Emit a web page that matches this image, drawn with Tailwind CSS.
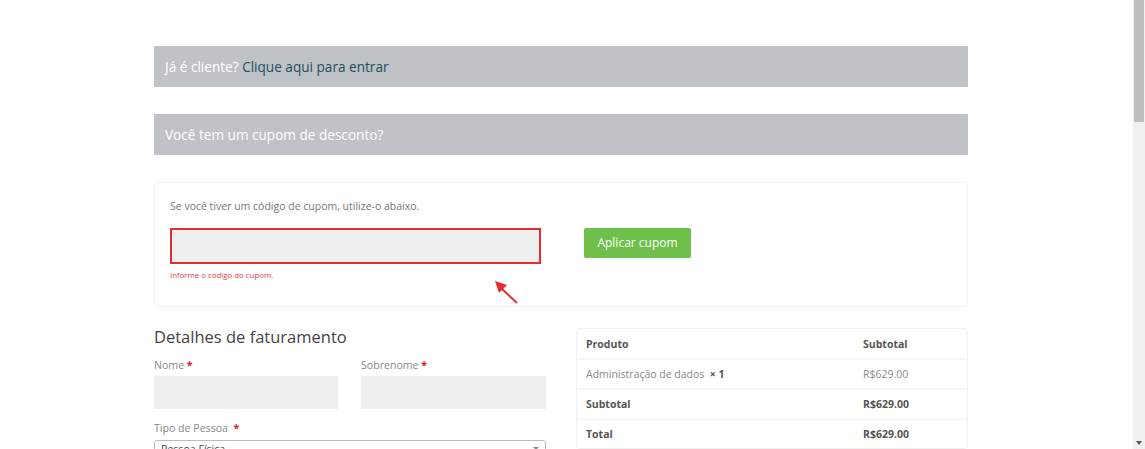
<!DOCTYPE html>
<html lang="pt-br">
  <head>
    <meta charset="UTF-8" />
    <title>Finalizar compra</title>
    <script src="https://cdn.jsdelivr.net/npm/@tailwindcss/browser@4"></script>
  </head>
  <body class="h-[449px] overflow-hidden bg-white font-['Open_Sans',sans-serif] text-[#666]">
    <div class="flex h-[449px]">
      <main class="relative flex-1 pl-[154px] pt-[46px]">
        <div class="w-[814px]">
          <!-- Avisos -->
          <div class="flex h-[41px] items-center bg-[#bfc2c6] px-[11px] pt-[2px] text-[13.6px] text-white">
            Já é cliente?&nbsp;<a href="#" class="text-[#1d4f5c]">Clique aqui para entrar</a>
          </div>
          <div class="mt-[27px] flex h-[41px] items-center bg-[#bfc2c6] px-[11px] pt-px text-[13.6px] text-white">
            Você tem um cupom de desconto?
          </div>

          <!-- Cupom -->
          <div class="mt-[27px] h-[125px] rounded border border-[#f0f0f0] pl-[15px] pt-[14px]">
            <p class="text-[10.5px] leading-[18px] text-[#777]">Se você tiver um código de cupom, utilize-o abaixo.</p>
            <div class="mt-[13px] flex items-start">
              <div class="w-[371px]">
                <input type="text" class="block h-[36px] w-full border-2 border-[#e52d2d] bg-[#efefef]" />
                <p class="mt-[6px] text-[7.85px] leading-[11px] text-[#e03c3c]">Informe o código do cupom.</p>
              </div>
              <button class="ml-[43px] h-[30px] w-[107px] rounded-[2px] bg-[#6fbf4b] text-[12px] text-white">Aplicar cupom</button>
            </div>
          </div>

          <div class="mt-[18px] flex justify-between">
            <!-- Faturamento -->
            <section class="w-[392px]">
              <h2 class="text-[16.5px] leading-[24px] text-[#444]">Detalhes de faturamento</h2>
              <div class="mt-[8px] flex justify-between">
                <div class="w-[184px]">
                  <label class="block text-[10.6px] leading-[16px] text-[#888]">Nome <span class="font-bold text-[#e02020]">*</span></label>
                  <div class="mt-[3px] h-[33px] bg-[#efefef]"></div>
                </div>
                <div class="w-[185px]">
                  <label class="block text-[10.6px] leading-[16px] text-[#888]">Sobrenome <span class="font-bold text-[#e02020]">*</span></label>
                  <div class="mt-[3px] h-[33px] bg-[#efefef]"></div>
                </div>
              </div>
              <label class="mt-[11px] block text-[10.6px] leading-[16px] text-[#888]">Tipo de Pessoa &nbsp;<span class="font-bold text-[#e02020]">*</span></label>
              <div class="mt-[4px] flex h-[33px] items-start justify-between rounded-[3px] border border-[#bbb] pl-[6px] pr-[6px] text-[10.6px] leading-[16px] text-[#444]">
                <span>Pessoa Física</span>
                <svg class="mt-[6px]" width="6" height="3" viewBox="0 0 6 3"><path d="M0 0h6L3 3z" fill="#888" /></svg>
              </div>
            </section>

            <!-- Pedido -->
            <section class="mt-[3px] h-[121px] w-[392px] rounded border border-[#f0f0f0] text-[10.5px]">
              <div class="flex h-[31px] items-center border-b-2 border-[#f5f5f5] pl-[9px] pt-[2px] font-bold text-[#555]">
                <span class="w-[277px]">Produto</span><span>Subtotal</span>
              </div>
              <div class="flex h-[30px] items-center border-b-2 border-[#f5f5f5] pl-[9px] pt-[2px] text-[#888]">
                <span class="w-[277px]">Administração de dados &nbsp;<b class="text-[#555]">× 1</b></span><span>R$629.00</span>
              </div>
              <div class="flex h-[30px] items-center border-b border-[#f0f0f0] pl-[9px] font-bold text-[#555]">
                <span class="w-[277px]">Subtotal</span><span>R$629.00</span>
              </div>
              <div class="flex h-[28px] items-center pl-[9px] pt-[2px] font-bold text-[#555]">
                <span class="w-[277px]">Total</span><span>R$629.00</span>
              </div>
            </section>
          </div>
        </div>

        <!-- Seta sobre a captura -->
        <svg class="absolute left-[493px] top-[280px]" width="26" height="25" viewBox="0 0 26 25">
          <path d="M24 23 8 8" stroke="#e52d2d" stroke-width="2" />
          <path d="M2 1l12 4-8 8z" fill="#e52d2d" />
        </svg>
      </main>

      <!-- Scrollbar -->
      <div class="flex h-full w-[12px] flex-col justify-between bg-[#f0f0f0]">
        <div class="mx-auto h-[122px] w-[10px] bg-[#bdbdbd]"></div>
        <svg class="mx-auto mb-[4px]" width="6" height="4" viewBox="0 0 6 4"><path d="M0 0h6L3 4z" fill="#555" /></svg>
      </div>
    </div>
  </body>
</html>
